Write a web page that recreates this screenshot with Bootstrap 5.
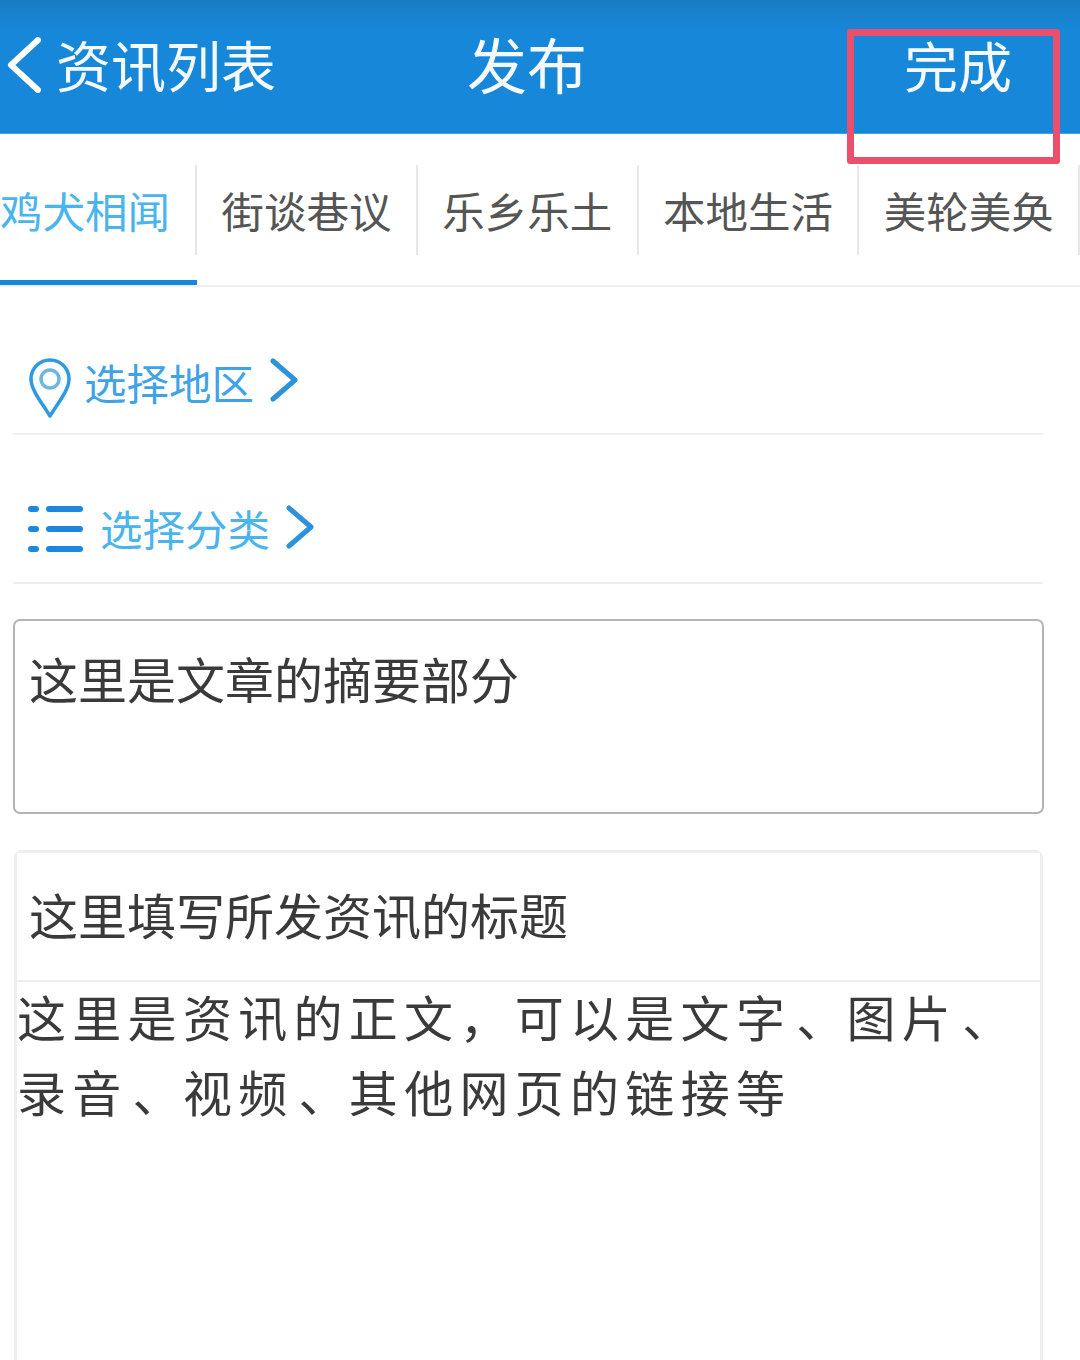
<!DOCTYPE html>
<html lang="zh-CN">
<head>
  <meta charset="UTF-8" />
  <meta name="viewport" content="width=device-width, initial-scale=1.0"/>
  <title>发布</title>
  <link href="https://cdn.jsdelivr.net/npm/bootstrap@5.3.3/dist/css/bootstrap.min.css" rel="stylesheet">
  <style>
    html, body { height: 1360px; overflow: hidden; background: #fff; }
    body, .form-control { font-family: "Noto Sans CJK SC", "Liberation Sans", sans-serif; font-weight: 400; }
    .top-bar {
      height: 134px;
      padding: 0;
      background: linear-gradient(#1a7cc2, #1787d9 30px);
      border-bottom: 1px solid #37a5e6;
      color: #f4f9fd;
    }
    .back-link { font-size: 55px; line-height: 1; padding-left: 7px; gap: 15px; margin-top: -6px; }
    .back-link svg { margin-top: 3px; }
    .page-title { left: 467px; top: 33px; font-size: 60px; line-height: 1; }
    .done-text { right: 68px; top: 38px; font-size: 54px; line-height: 1; }
    .mark-box {
      left: 847px; top: 29px; width: 213px; height: 135px;
      border: 7px solid #ea4f6b; border-radius: 3px; z-index: 2;
    }
    .tab-strip { height: 153px; border-bottom: 2px solid #eeeeee; overflow: hidden; }
    .tab-cell {
      flex: 0 0 220.8px; height: 151px; padding-top: 31px;
      font-size: 42.5px; color: #555; text-align: center;
      white-space: nowrap;
    }
    .tab-cell > span { display: block; height: 90px; line-height: 90px; border-right: 2px solid #e8e8e8; }
    .tab-cell.first { flex-basis: 197px; border-bottom: 7px solid #1787d9; color: #4ab4ee; margin-bottom: -2px; height: 153px; }
    .tab-cell.first > span { text-align: left; }
    .pick-row {
      margin: 0 37px 0 13px; border-bottom: 2px solid #eeeeee;
      font-size: 42.5px; line-height: 1; color: #3fa3e6; padding-left: 15px;
    }
    .pick-row.area { height: 148px; padding-top: 44px; }
    .pick-row.kind { height: 149px; color: #4ab4ee; padding-top: 40px; }
    .pin-icon { margin-top: 12px; }
    .arrow-icon { margin-top: -4px; }
    .text-box.form-control {
      width: 1031px; height: 195px; margin: 35px 0 0 13px; padding: 25px 14px;
      font-size: 49px; line-height: 64px; color: #3a3a3a; border: 2px solid #b4b4b4; border-radius: 7px;
    }
    .body-card.card {
      width: 1029px; height: 510px; margin: 36px 0 0 14px;
      border: 3px solid #eeeeee; border-bottom: 0; border-radius: 8px 8px 0 0;
    }
    .body-card .card-header {
      height: 129px; padding: 26px 12px; background: #fff; border-bottom: 2px solid #eeeeee;
      font-size: 49px; line-height: 70px; color: #3a3a3a; border-radius: 0;
    }
    .body-card .card-body {
      padding: 0; margin-top: -4px; font-size: 49px; line-height: 75px; letter-spacing: 6.3px; color: #3a3a3a;
    }
    .pause-mark { padding-left: 5px; letter-spacing: 1.3px; }
  </style>
</head>
<body>

<!-- Header -->
<nav class="top-bar d-flex align-items-center position-relative">
  <div class="back-link d-flex align-items-center">
    <svg width="34" height="56" viewBox="0 0 34 56" fill="none" stroke="#fff" stroke-width="6" stroke-linecap="round" stroke-linejoin="round"><path d="M31 3 4 28l27 25"/></svg>
    <span>资讯列表</span>
  </div>
  <div class="page-title position-absolute">发布</div>
  <div class="done-text position-absolute">完成</div>
</nav>
<div class="mark-box position-absolute"></div>

<!-- Tabs -->
<div class="tab-strip d-flex">
  <div class="tab-cell first"><span>鸡犬相闻</span></div>
  <div class="tab-cell"><span>街谈巷议</span></div>
  <div class="tab-cell"><span>乐乡乐土</span></div>
  <div class="tab-cell"><span>本地生活</span></div>
  <div class="tab-cell"><span>美轮美奂</span></div>
</div>

<!-- Pickers -->
<div class="pick-row area d-flex align-items-center">
  <svg class="pin-icon me-2" width="44" height="62" viewBox="0 0 44 62" fill="none" stroke="#2f9ae0" stroke-width="3.5" stroke-linejoin="round"><path d="M22 59C14 46 3 33 3 22a19 19 0 0 1 38 0c0 11-11 24-19 37Z"/><circle cx="22" cy="22" r="9" stroke="#6fb5e3"/></svg>
  <span class="ms-1">选择地区</span>
  <svg class="arrow-icon ms-3" width="28" height="44" viewBox="0 0 28 44" fill="none" stroke="#2c92dc" stroke-width="5" stroke-linecap="round" stroke-linejoin="round"><path d="M3 3l22 19L3 41"/></svg>
</div>
<div class="pick-row kind d-flex align-items-center">
  <svg width="56" height="46" viewBox="0 0 56 46" fill="#1c88dc"><rect x="0" y="0" width="11" height="6" rx="3"/><rect x="18" y="0" width="37" height="6" rx="3"/><rect x="0" y="20" width="11" height="6" rx="3"/><rect x="18" y="20" width="37" height="6" rx="3"/><rect x="0" y="40" width="11" height="6" rx="3"/><rect x="18" y="40" width="37" height="6" rx="3"/></svg>
  <span class="ms-3">选择分类</span>
  <svg class="arrow-icon ms-3" width="28" height="44" viewBox="0 0 28 44" fill="none" stroke="#2c92dc" stroke-width="5" stroke-linecap="round" stroke-linejoin="round"><path d="M3 3l22 19L3 41"/></svg>
</div>

<!-- Summary -->
<div class="text-box form-control">这里是文章的摘要部分</div>

<!-- Article -->
<div class="body-card card">
  <div class="card-header">这里填写所发资讯的标题</div>
  <div class="card-body">这里是资讯的正文，可以是文字<span class="pause-mark">、</span>图片<span class="pause-mark">、</span><br>录音<span class="pause-mark">、</span>视频<span class="pause-mark">、</span>其他网页的链接等</div>
</div>

<script src="https://cdn.jsdelivr.net/npm/bootstrap@5.3.3/dist/js/bootstrap.bundle.min.js"></script>
</body>
</html>
